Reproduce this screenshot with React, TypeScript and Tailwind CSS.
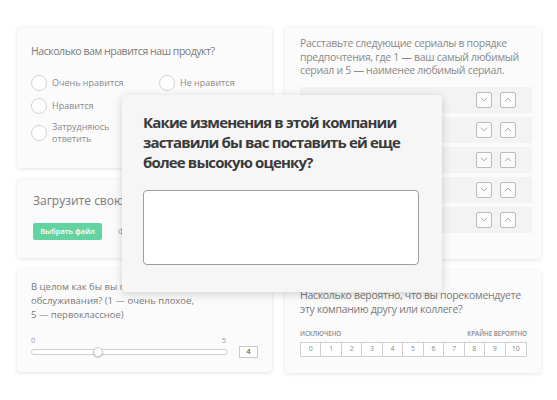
import React from 'react';

const font = { fontFamily: '"Open Sans", "Liberation Sans", sans-serif' };

const Radio = ({ label }: { label: React.ReactNode }) => (
  <div className="flex items-center gap-[5px]">
    <span className="w-[16px] h-[16px] shrink-0 rounded-full border border-[#d4d4d4] bg-white" />
    <span className="text-[9px] leading-[12px] text-[#8a8a8a]">{label}</span>
  </div>
);

const Chevron = ({ up }: { up?: boolean }) => (
  <span className="w-[16px] h-[16px] flex items-center justify-center rounded-[2px] border border-[#bdbdbd] bg-[#fbfbfb]">
    <svg width="8" height="5" viewBox="0 0 8 5" fill="none" stroke="#9a9a9a" strokeWidth="0.9">
      {up ? <path d="M1 4.2L4 1.2L7 4.2" /> : <path d="M1 0.8L4 3.8L7 0.8" />}
    </svg>
  </span>
);

const Card = ({ className, children }: { className?: string; children: React.ReactNode }) => (
  <div className={`rounded-[4px] bg-[#fbfbfb] shadow-[0_1px_4px_rgba(0,0,0,0.12)] ${className ?? ''}`}>
    {children}
  </div>
);

export default function App() {
  return (
    <div className="relative w-[557px] h-[400px] bg-white overflow-hidden" style={font}>
      <div className="grid grid-cols-[255px_256px] gap-x-[13px] pl-[17px] pt-[27px]">
        <div className="flex flex-col gap-[11px]">
          <Card className="h-[141px] px-[14px] pt-[16px]">
            <p className="text-[10.5px] leading-[16px] tracking-[-0.45px] text-[#7a7a7a] whitespace-nowrap">Насколько вам нравится наш продукт?</p>
            <div className="mt-[16px] grid grid-cols-[128px_1fr] gap-y-[7px]">
              <Radio label="Очень нравится" />
              <Radio label="Не нравится" />
              <Radio label="Нравится" />
              <div />
              <Radio label={<>Затрудняюсь<br />ответить</>} />
            </div>
          </Card>
          <Card className="h-[79px] px-[16px] pt-[14px]">
            <p className="text-[12px] leading-[16px] text-[#7a7a7a] whitespace-nowrap">Загрузите свою фотографию</p>
            <div className="mt-[14px] flex items-center gap-[16px]">
              <span className="w-[69px] h-[17px] rounded-[2px] bg-[#63d3a2] text-white text-[7.5px] font-semibold flex items-center justify-center">
                Выбрать файл
              </span>
              <span className="text-[9px] text-[#9a9a9a]">Файл не выбран</span>
            </div>
          </Card>
          <Card className="h-[103px] px-[14px] pt-[11px]">
            <p className="text-[9.5px] leading-[14px] text-[#7a7a7a] whitespace-nowrap">
              В целом как бы вы оценили качество
              <br />
              обслуживания? (1 — очень плохое,
              <br />5 — первоклассное)
            </p>
            <div className="mt-[14px] flex items-end gap-[11px]">
              <div className="w-[197px]">
                <div className="flex justify-between text-[7.5px] leading-[9px] text-[#9a9a9a] pr-[2px]">
                  <span>0</span>
                  <span>5</span>
                </div>
                <div className="relative mt-[4px] h-[6px] rounded-full border border-[#d0d0d0] bg-white">
                  <span className="absolute left-[61px] top-[-3px] w-[10px] h-[10px] rounded-full border border-[#cfcfcf] bg-white shadow-[0_1px_2px_rgba(0,0,0,0.2)]" />
                </div>
              </div>
              <span className="w-[19px] h-[12px] mb-[-3px] border border-[#c8c8c8] bg-white text-[7.5px] font-semibold text-[#666] flex items-center justify-center">
                4
              </span>
            </div>
          </Card>
        </div>
        <div className="flex flex-col gap-[11px]">
          <Card className="h-[232px] px-[15px] pt-[10px]">
            <p className="text-[10.5px] leading-[13.5px] tracking-[-0.3px] text-[#8a8a8a] whitespace-nowrap">
              Расставьте следующие сериалы в порядке
              <br />
              предпочтения, где 1 — ваш самый любимый
              <br />
              сериал и 5 — наименее любимый сериал.
            </p>
            <div className="mt-[9px] mr-[-6px] flex flex-col gap-[4px]">
              {[0, 1, 2, 3, 4].map((i) => (
                <div key={i} className="h-[26px] bg-[#f3f3f3] flex items-center justify-end gap-[8px] pr-[16px]">
                  <Chevron />
                  <Chevron up />
                </div>
              ))}
            </div>
          </Card>
          <Card className="h-[103px] px-[15px] pt-[18px]">
            <p className="text-[10.5px] leading-[14px] tracking-[-0.3px] text-[#7a7a7a] whitespace-nowrap">
              Насколько вероятно, что вы порекомендуете
              <br />
              эту компанию другу или коллеге?
            </p>
            <div className="mt-[14px] w-[227px] flex justify-between text-[6.2px] font-semibold text-[#8a8a8a] leading-[8px]">
              <span>ИСКЛЮЧЕНО</span>
              <span>КРАЙНЕ ВЕРОЯТНО</span>
            </div>
            <div className="mt-[4px] w-[227px] h-[15px] grid grid-cols-11 border border-[#cfcfcf] bg-white">
              {Array.from({ length: 11 }, (_, i) => (
                <span key={i} className={`flex items-center justify-center text-[7px] text-[#8a8a8a] ${i < 10 ? 'border-r border-[#cfcfcf]' : ''}`}>
                  {i}
                </span>
              ))}
            </div>
          </Card>
        </div>
      </div>

      <div className="absolute left-[122px] top-[95px] w-[320px] h-[197px] rounded-[4px] bg-[#f6f6f6] shadow-[0_2px_10px_rgba(0,0,0,0.18)] px-[21px] pt-[17px]">
        <p className="text-[15px] leading-[20px] font-bold tracking-[-0.85px] text-[#3a3a3a] whitespace-nowrap">
          Какие изменения в этой компании
          <br />
          заставили бы вас поставить ей еще
          <br />
          более высокую оценку?
        </p>
        <div className="mt-[18px] w-[276px] h-[75px] rounded-[4px] border-[1.5px] border-[#9e9e9e] bg-white" />
      </div>
    </div>
  );
}
